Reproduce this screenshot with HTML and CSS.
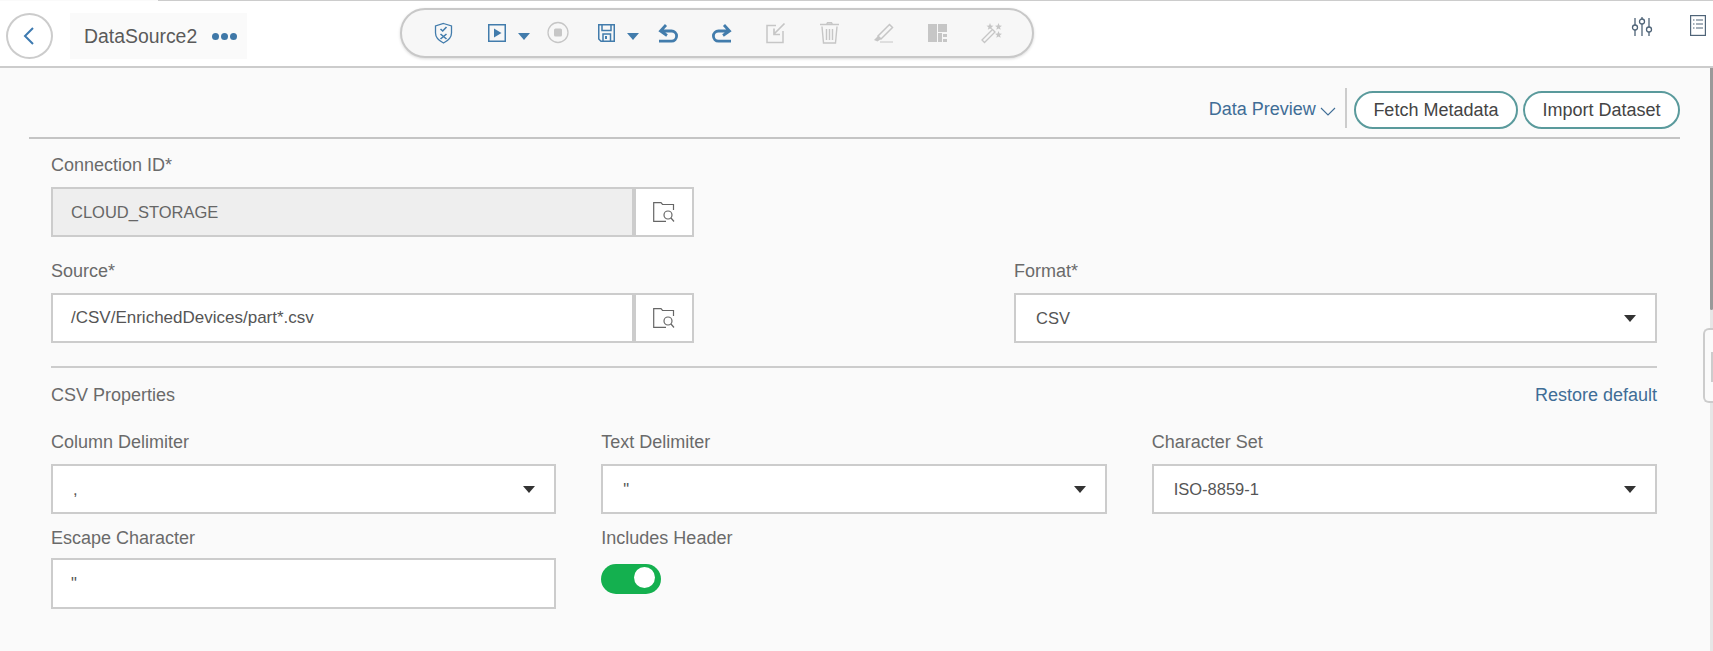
FILE: index.html

```html
<!DOCTYPE html>
<html lang="en">
<head>
<meta charset="UTF-8">
<title>DataSource2</title>
<link rel="stylesheet" href="styles.css">
</head>
<body>
<div class="top-line"></div>
<div class="header">
  <button class="back">
    <svg width="12" height="18" viewBox="0 0 12 18"><path d="M10 1 L2 9 L10 17" fill="none" stroke="#3d7ab0" stroke-width="2"/></svg>
  </button>
  <div class="title-chip">
    <span class="title">DataSource2</span>
    <span class="dots"><i></i><i></i><i></i></span>
  </div>
  <div class="toolbar">
    <svg class="tool blue" viewBox="0 0 24 24"><path d="M12.5 2.5 L20.5 5 V12 C20.5 17 16.5 20 12.5 22 C8.5 20 4.5 17 4.5 12 V5 Z" fill="none" stroke-width="1.3"/><path d="M9.5 8 L11.7 10 L15.5 6 M9.5 13 L15.5 18 M15.5 13 L9.5 18" fill="none" stroke-width="1.6"/></svg>
    <svg class="tool blue" viewBox="0 0 24 24"><rect x="3.75" y="3.75" width="16.5" height="16.5" fill="none" stroke-width="1.5"/><path class="solid" d="M9 7.5 L16.5 12 L9 16.5 Z"/></svg>
    <span class="caret"></span>
    <svg class="tool gray after-caret" viewBox="0 0 24 24"><circle cx="12" cy="11.5" r="10" fill="none" stroke-width="1.3"/><rect class="solid" x="8" y="7.5" width="8" height="8" rx="1.5"/></svg>
    <svg class="tool blue after-stop" viewBox="0 0 24 24"><path d="M4.75 3.75 H20.25 V20.25 H7 L4.75 18 Z M8 4 V9.5 H17 V4 M9 20 V13 H16.5 V20" fill="none" stroke-width="1.5"/><rect class="solid" x="11" y="15" width="2" height="3"/></svg>
    <span class="caret"></span>
    <svg class="tool blue after-save" viewBox="0 0 24 24"><path d="M10 4 L4.5 10 L11 14.5 M4.5 10 H15.5 A5 5 0 0 1 15.5 20.2 H3" fill="none" stroke-width="2.8"/></svg>
    <svg class="tool blue" viewBox="0 0 24 24"><path d="M14 4 L19.5 10 L13 14.5 M19.5 10 H8.5 A5 5 0 0 0 8.5 20.2 H21" fill="none" stroke-width="2.8"/></svg>
    <svg class="tool gray after-redo" viewBox="0 0 24 24"><path d="M13 4.5 H4 V21.5 H20 V10" fill="none" stroke-width="1.5"/><path d="M21.5 2.5 L11.5 12.5 M11 7.5 V13.5 H17" fill="none" stroke-width="1.7"/></svg>
    <svg class="tool gray" viewBox="0 0 24 24"><path d="M3 3.5 H22 M9.5 3.5 L10.5 1.7 H14.5 L15.5 3.5 M5 5.5 L6.5 22 H18.5 L20 5.5 M9.5 8 V19 M12.5 8 V19 M15.5 8 V19" fill="none" stroke-width="1.4"/></svg>
    <svg class="tool gray" viewBox="0 0 24 24"><path d="M18.5 3.5 L21.5 6.5 L10 18 L7 15 Z" fill="none" stroke-width="1.5"/><path class="solid" d="M7 15 L10 18 L6.5 20.5 L3 19 Z"/><path d="M9 21 H22" fill="none" stroke-width="1"/></svg>
    <svg class="tool gray" viewBox="0 0 24 24"><g class="solid"><rect x="3" y="3" width="9" height="18"/><rect x="13" y="3" width="9" height="8"/><rect x="13" y="12" width="4" height="9"/><rect x="18" y="13" width="4" height="3"/><rect x="18" y="18" width="4" height="3"/></g></svg>
    <svg class="tool gray" viewBox="0 0 24 24"><path d="M3 19 L13.5 8.5 L16 11 L5.5 21.5 Z" fill="none" stroke-width="1.3"/><path class="solid" d="M11 2 L12 4.5 L14.5 4.7 L12.5 6.3 L13.2 8.8 L11 7.4 L8.8 8.8 L9.5 6.3 L7.5 4.7 L10 4.5 Z M19.5 2 L20.5 4.5 L23 4.7 L21 6.3 L21.7 8.8 L19.5 7.4 L17.3 8.8 L18 6.3 L16 4.7 L18.5 4.5 Z M19.5 10 L20.5 12.5 L23 12.7 L21 14.3 L21.7 16.8 L19.5 15.4 L17.3 16.8 L18 14.3 L16 12.7 L18.5 12.5 Z"/></svg>
  </div>
  <div class="header-right">
    <svg class="sliders" width="22" height="20" viewBox="0 0 22 20"><g fill="none" stroke="#4f6478" stroke-width="1.3"><path d="M4 1 V8 M4 13 V19 M11 0 V2 M11 7 V19 M18 1 V10 M18 15 V19"/><circle cx="4" cy="10.5" r="2.5"/><circle cx="11" cy="4.5" r="2.5"/><circle cx="18" cy="12.5" r="2.5"/></g></svg>
    <svg class="doc" width="16" height="21" viewBox="0 0 16 21"><g fill="none" stroke="#4f6478" stroke-width="1.2"><rect x="0.6" y="0.6" width="14.8" height="19.8"/><path d="M3 5 H4.5 M6 5 H13 M3 9 H4.5 M6 9 H13 M3 13 H4.5 M6 13 H13"/></g></svg>
  </div>
</div>

<div class="main">
  <div class="actions">
    <a class="link preview">Data Preview
      <svg width="16" height="9" viewBox="0 0 16 9"><path d="M1 1 L8 8 L15 1" fill="none" stroke="#3f6d96" stroke-width="1.1"/></svg>
    </a>
    <span class="sep"></span>
    <button class="pill-btn">Fetch Metadata</button>
    <button class="pill-btn">Import Dataset</button>
  </div>

  <div class="form">
    <label class="lbl">Connection ID*</label>
    <div class="input-row">
      <div class="box disabled">CLOUD_STORAGE</div>
      <button class="browse">
        <svg width="22" height="20" viewBox="0 0 22 20"><path d="M13 19.4 H0.7 V0.7 H8 L9.5 2.5 H20.5 V8 M18 16 L21 19.5" fill="none" stroke="#666" stroke-width="1.2"/><circle cx="15" cy="13" r="4" fill="none" stroke="#666" stroke-width="1.2"/></svg>
      </button>
    </div>

    <div class="source-row">
      <div>
        <label class="lbl">Source*</label>
        <div class="input-row">
          <div class="box path">/CSV/EnrichedDevices/part*.csv</div>
          <button class="browse">
            <svg width="22" height="20" viewBox="0 0 22 20"><path d="M13 19.4 H0.7 V0.7 H8 L9.5 2.5 H20.5 V8 M18 16 L21 19.5" fill="none" stroke="#666" stroke-width="1.2"/><circle cx="15" cy="13" r="4" fill="none" stroke="#666" stroke-width="1.2"/></svg>
          </button>
        </div>
      </div>
      <div>
        <label class="lbl">Format*</label>
        <div class="box select">CSV</div>
      </div>
    </div>

    <div class="section-head">
      <span>CSV Properties</span>
      <a class="link">Restore default</a>
    </div>

    <div class="props">
      <div>
        <label class="lbl">Column Delimiter</label>
        <div class="box select">,</div>
      </div>
      <div>
        <label class="lbl">Text Delimiter</label>
        <div class="box select">"</div>
      </div>
      <div>
        <label class="lbl">Character Set</label>
        <div class="box select">ISO-8859-1</div>
      </div>
      <div>
        <label class="lbl">Escape Character</label>
        <div class="box escape">"</div>
      </div>
      <div>
        <label class="lbl">Includes Header</label>
        <div class="toggle"><span class="knob"></span></div>
      </div>
    </div>
  </div>
</div>

<div class="scroll-track"><div class="scroll-thumb"></div></div>
<div class="side-handle"><span></span></div>
</body>
</html>
```

FILE: styles.css

```css
* {
    box-sizing: border-box;
}
html, body {
    height: 100%;
}
body {
    margin: 0;
    overflow: hidden;
    font-family: "Liberation Sans", Arial, sans-serif;
    font-size: 18px;
    color: #444;
    background-color: #fafafa;
}
button {
    font-family: inherit;
    font-size: inherit;
    color: inherit;
    cursor: pointer;
}
.top-line {
    height: 1px;
    margin-left: 158px;
    background-color: #ccc;
}

/* header */
.header {
    display: flex;
    align-items: flex-start;
    height: 67px;
    padding-left: 6px;
    background-color: #fff;
    border-bottom: 2px solid #ccc;
}
.back {
    width: 47px;
    height: 46px;
    margin-top: 12px;
    padding: 0 2px 0 0;
    border: 2px solid #ccc;
    border-radius: 50%;
    background: #fff;
    display: flex;
    align-items: center;
    justify-content: center;
}
.title-chip {
    display: flex;
    align-items: center;
    width: 177px;
    height: 46px;
    margin: 12px 0 0 17px;
    padding-left: 14px;
    background-color: #fafafa;
}
.title {
    font-size: 19.4px;
    color: #5a5a5a;
}
.dots {
    display: flex;
    gap: 2px;
    margin-left: 15px;
    margin-top: 1px;
}
.dots i {
    width: 7px;
    height: 7px;
    border-radius: 50%;
    background-color: #3f78a8;
}
.toolbar {
    display: flex;
    align-items: center;
    width: 634px;
    height: 50px;
    margin: 7px 0 0 153px;
    background-color: #f7f7f7;
    border: 2px solid #c8c8c8;
    border-radius: 25px;
    box-shadow: 0 1px 3px rgba(0,0,0,0.15);
}
.tool {
    flex: none;
    width: 24px;
    height: 24px;
    margin-left: 30px;
}
.toolbar > .tool:first-child {
    margin-left: 29px;
}
.tool.blue {
    stroke: #427cac;
    fill: #427cac;
}
.tool.gray {
    stroke: #c6c6c6;
    fill: #c6c6c6;
}
.tool .solid {
    stroke: none;
}
.tool.after-caret {
    margin-left: 16px;
}
.tool.after-stop {
    margin-left: 24px;
}
.tool.after-save {
    margin-left: 17px;
}
.tool.after-redo {
    margin-left: 29px;
}
.caret {
    flex: none;
    width: 0;
    height: 0;
    margin: 6px 0 0 9px;
    border-left: 6px solid transparent;
    border-right: 6px solid transparent;
    border-top: 7px solid #427cac;
}
.header-right {
    display: flex;
    align-items: flex-start;
    margin: 14px 0 0 auto;
}
.sliders {
    margin-top: 2px;
}
.doc {
    margin: 0 7px 0 37px;
}

/* main */
.main {
    padding: 0 33px 0 29px;
}
.actions {
    display: flex;
    align-items: center;
    justify-content: flex-end;
    height: 71px;
    padding-top: 15px;
    border-bottom: 2px solid #c4c4c4;
}
.link {
    color: #3f6d96;
}
.preview {
    display: flex;
    align-items: center;
    gap: 4px;
    margin-top: -2px;
}
.preview svg {
    margin-top: 4px;
}
.sep {
    width: 2px;
    height: 40px;
    margin: -4px 7px 0 9px;
    background-color: #ccc;
}
.pill-btn {
    height: 38px;
    padding: 0 17.5px;
    margin-left: 5px;
    border: 2px solid #5a9a9c;
    border-radius: 19px;
    background-color: #fff;
}
.sep + .pill-btn {
    margin-left: 0;
}
.form {
    padding: 16px 23px 0 22px;
}
.lbl {
    display: block;
    height: 20px;
    line-height: 20px;
    margin-bottom: 12px;
    color: #6a6a6a;
}
.box {
    position: relative;
    display: flex;
    align-items: center;
    height: 50px;
    padding-left: 18px;
    font-size: 16.5px;
    color: #555;
    background-color: #fff;
    border: 2px solid #ccc;
}
.disabled {
    color: #666;
    background-color: #eee;
}
.path {
    font-size: 17px;
}
.select {
    padding-left: 20px;
}
.select::after {
    content: "";
    position: absolute;
    top: 20px;
    right: 19px;
    border-left: 6px solid transparent;
    border-right: 6px solid transparent;
    border-top: 7px solid #333;
}
.input-row {
    display: flex;
    width: 643px;
}
.input-row .box {
    flex: 1;
}
.browse {
    flex: none;
    width: 60px;
    height: 50px;
    padding: 0;
    background-color: #fff;
    border: 2px solid #ccc;
    display: flex;
    align-items: center;
    justify-content: center;
}
.source-row {
    display: grid;
    grid-template-columns: 643px 643px;
    justify-content: space-between;
    margin-top: 24px;
    padding-bottom: 23px;
    border-bottom: 2px solid #ccc;
}
.section-head {
    display: flex;
    justify-content: space-between;
    line-height: 20px;
    margin-top: 17px;
    color: #6a6a6a;
}
.props {
    display: grid;
    grid-template-columns: repeat(3, 1fr);
    column-gap: 45px;
    row-gap: 14px;
    margin-top: 27px;
}
.escape {
    height: 51px;
    margin-top: -2px;
}
.toggle {
    display: flex;
    align-items: flex-start;
    justify-content: flex-end;
    width: 60px;
    height: 30px;
    margin-top: 16px;
    padding: 3px 6px 0 0;
    background-color: #14b04f;
    border-radius: 15px;
}
.knob {
    width: 21px;
    height: 21px;
    border-radius: 50%;
    background-color: #fff;
}

/* page scrollbar and the side handle lie over the content */
.scroll-track {
    position: absolute;
    top: 68px;
    right: 0;
    bottom: 0;
    width: 3px;
    background-color: #e6e6e6;
}
.scroll-thumb {
    height: 242px;
    background-color: #999;
    border-radius: 0 0 2px 2px;
}
.side-handle {
    position: absolute;
    top: 328px;
    right: 0;
    width: 10px;
    height: 75px;
    padding: 22px 0 0 6px;
    background-color: #fafafa;
    border: 2px solid #ccc;
    border-right: none;
    border-radius: 6px 0 0 6px;
}
.side-handle span {
    display: block;
    width: 2px;
    height: 30px;
    background-color: #ccc;
}
```
